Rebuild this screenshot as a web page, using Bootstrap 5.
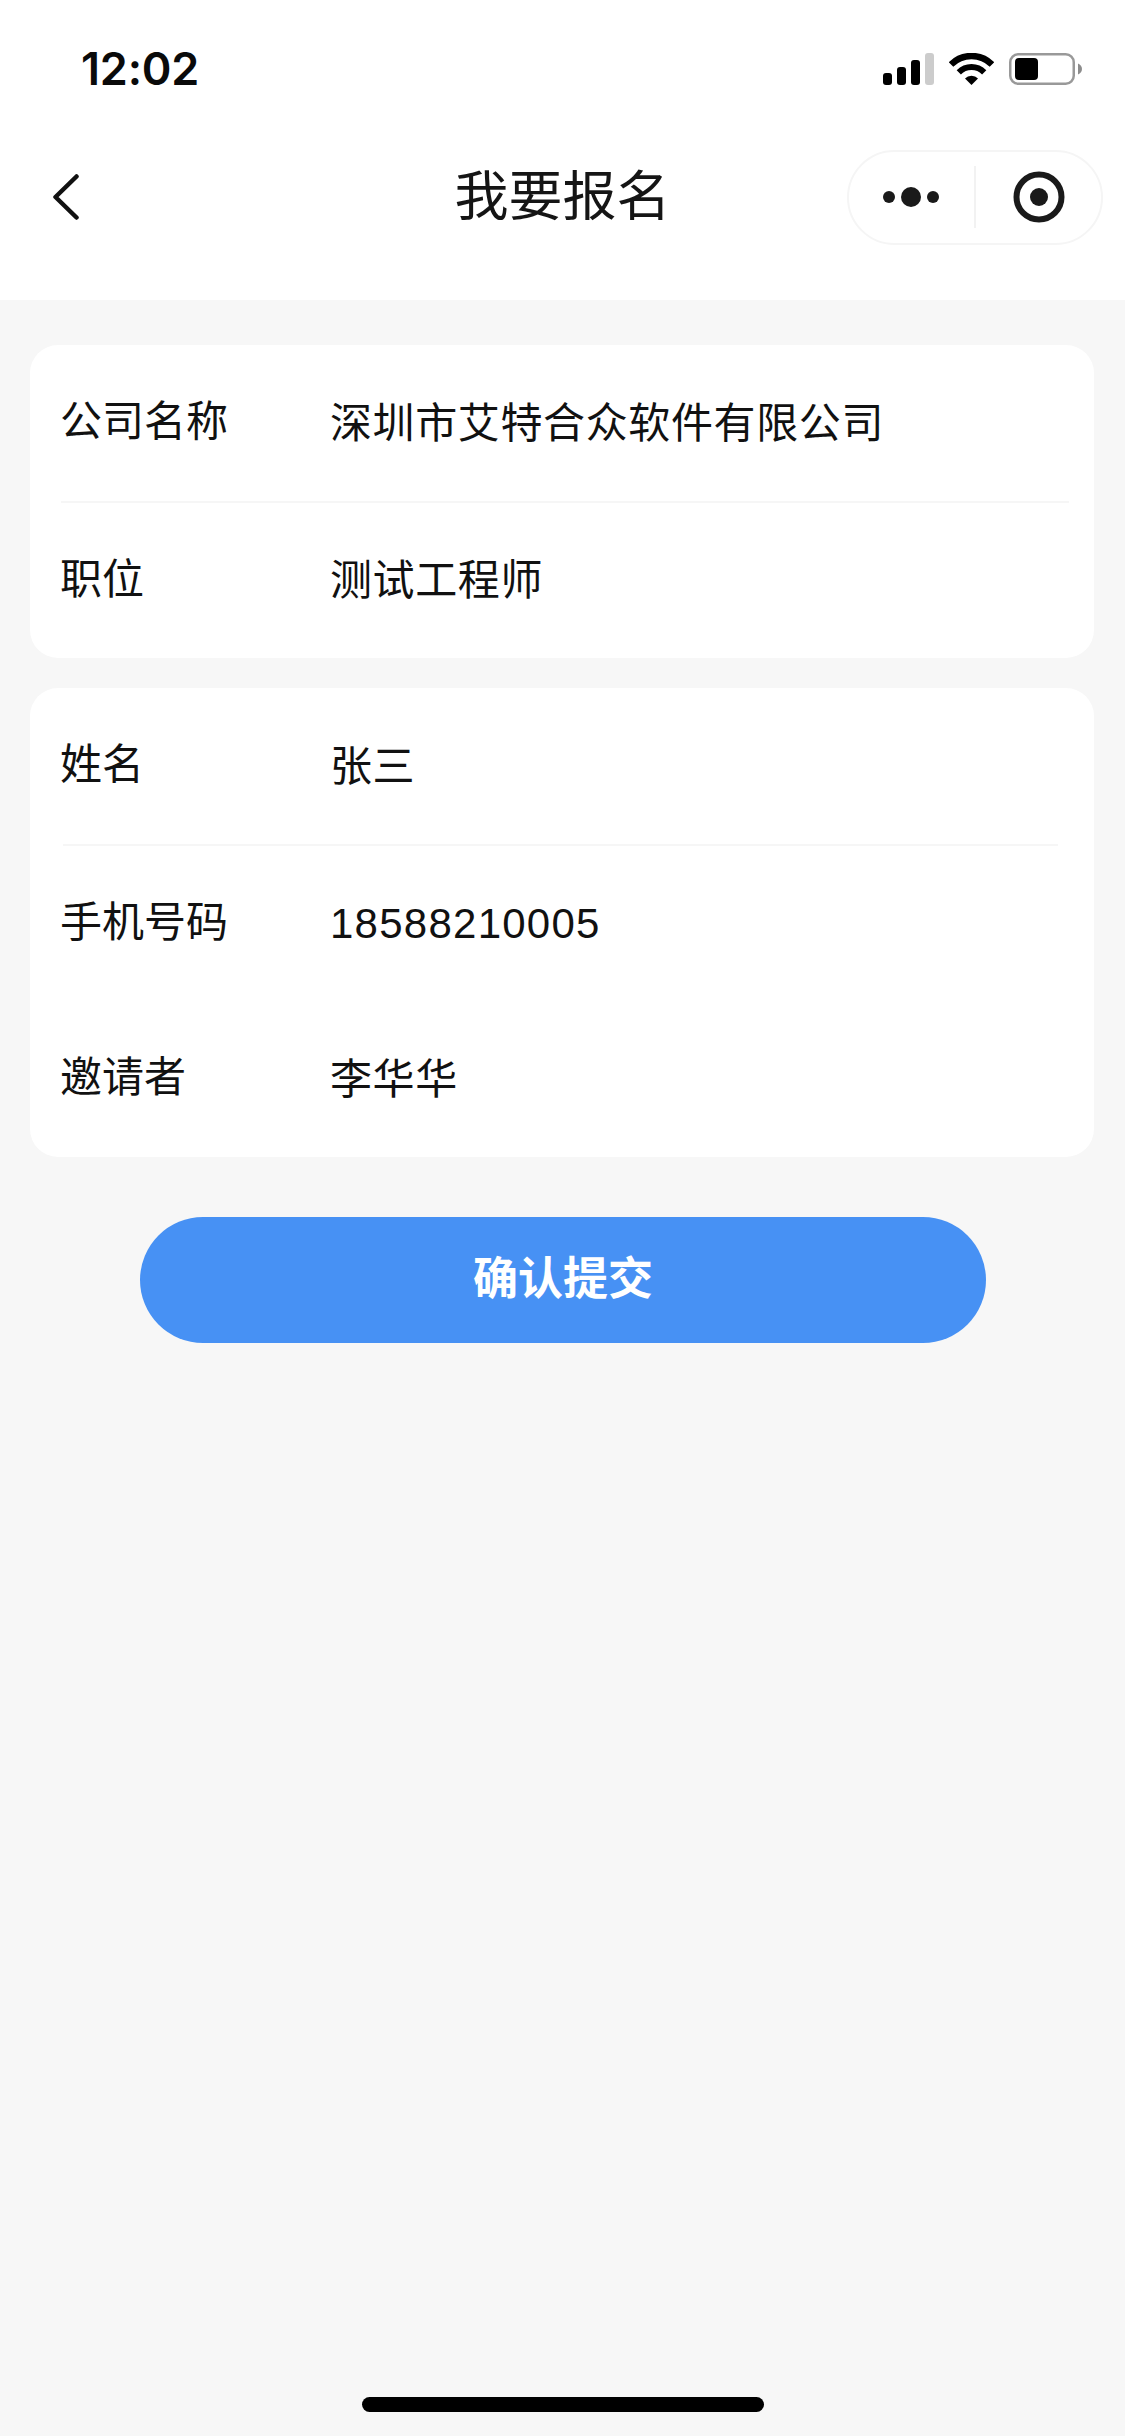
<!DOCTYPE html>
<html lang="zh-CN">
<head>
<meta charset="utf-8">
<title>我要报名</title>
<link href="https://cdn.jsdelivr.net/npm/bootstrap@5.3.0/dist/css/bootstrap.min.css" rel="stylesheet">
<style>
html,body{margin:0;background:#f7f7f7}
body{font-family:"Liberation Sans","Noto Sans CJK SC",sans-serif;color:#111;width:1125px}
.page-shell{min-height:2436px}
.top-area{height:300px;background:#fff}
.status-row{height:138px;padding:53px 30px 0 81px;align-items:flex-start}
.clock{font-family:"Inter","Liberation Sans",sans-serif;font-size:45px;font-weight:600;line-height:32px;color:#0a0a0a;letter-spacing:-.2px}
.status-icons{gap:15px;margin-right:13px}
.nav-row{display:grid;grid-template-columns:1fr auto 1fr;align-items:center;height:118px;padding:0 22px}
.back-mark{margin-left:31px}
.title-text{font-size:54px;line-height:70px;font-weight:400;color:#151515;margin:0}
.capsule{width:256px;height:95px;border:2px solid #f5f5f5;border-radius:48px;background:#fff;justify-self:end}
.capsule-half{width:125px}
.capsule-sep{width:2px;height:62px;background:#f2f2f2}
.form-wrap{padding:45px 31px 0 30px;gap:30px}
.info-card{border:0;border-radius:28px;background:#fff;overflow:hidden}
.info-row{height:155.500px;padding:2px 25px 0 30px;font-size:42px;line-height:60px;color:#111}
.info-label{width:270px;flex:none;margin-top:-3px}
.info-val{letter-spacing:.62px}
.info-sep{height:2px;background:#f6f6f6;margin:0 25px 0 31px}
.info-sep-b{margin:0 36px 0 33px}
.digits{letter-spacing:1.250px}
.submit-btn{width:846px;height:126px;margin:60px 0 0 140px;border:0;border-radius:63px;background:#4791f4;color:#fff;font-size:45px;font-weight:700;line-height:60px;padding:0}
.submit-btn:hover{background:#4791f4;color:#fff}
.home-bar{width:402px;height:15px;border-radius:8px;background:#000;margin:0 auto 24px}
</style>
</head>
<body>
<div class="page-shell d-flex flex-column">
  <header class="top-area">
    <div class="status-row d-flex justify-content-between">
      <div class="clock">12:02</div>
      <div class="status-icons d-flex align-items-start">
        <svg width="51" height="32" viewBox="0 0 51 32" aria-hidden="true">
          <rect x="0" y="20" width="9" height="12" rx="3" fill="#000"/>
          <rect x="14" y="14" width="9" height="18" rx="3" fill="#000"/>
          <rect x="28" y="7" width="9" height="25" rx="3" fill="#000"/>
          <rect x="42" y="0" width="9" height="32" rx="3" fill="#ccc"/>
        </svg>
        <svg width="45" height="32" viewBox="0 0 45 32" aria-hidden="true">
          <path d="M2 11.500A29 29 0 0 1 43 11.500" fill="none" stroke="#000" stroke-width="6.500"/>
          <path d="M9.800 19.300A18 18 0 0 1 35.200 19.300" fill="none" stroke="#000" stroke-width="6"/>
          <path d="M22.500 32L16 25.500A9 9 0 0 1 29 25.500Z" fill="#000"/>
        </svg>
        <svg width="73" height="32" viewBox="0 0 73 32" aria-hidden="true">
          <rect x="1.250" y="1.250" width="63.500" height="29.500" rx="8" fill="none" stroke="#999" stroke-width="2.500"/>
          <rect x="6" y="5" width="23" height="22" rx="4" fill="#000"/>
          <path d="M69 10.500C71.500 11.500 73 13.500 73 16S71.500 20.500 69 21.500Z" fill="#8c8c8c"/>
        </svg>
      </div>
    </div>
    <nav class="nav-row">
      <svg class="back-mark" width="26" height="46" viewBox="0 0 26 46" aria-hidden="true">
        <path d="M23.500 2.500L2.500 23L23.500 43.500" fill="none" stroke="#111" stroke-width="4.500" stroke-linecap="round" stroke-linejoin="round"/>
      </svg>
      <h1 class="title-text">我要报名</h1>
      <div class="capsule d-flex align-items-center">
        <div class="capsule-half d-flex justify-content-center">
          <svg width="58" height="20" viewBox="0 0 58 20" aria-hidden="true">
            <circle cx="6" cy="10" r="6" fill="#1a1a1a"/>
            <circle cx="28" cy="10" r="10" fill="#1a1a1a"/>
            <circle cx="50" cy="10" r="6" fill="#1a1a1a"/>
          </svg>
        </div>
        <div class="capsule-sep"></div>
        <div class="flex-grow-1 d-flex justify-content-center">
          <svg width="52" height="52" viewBox="0 0 52 52" aria-hidden="true">
            <circle cx="26" cy="26" r="22.500" fill="none" stroke="#1a1a1a" stroke-width="6"/>
            <circle cx="26" cy="26" r="9" fill="#1a1a1a"/>
          </svg>
        </div>
      </div>
    </nav>
  </header>

  <main class="flex-grow-1">
    <div class="form-wrap d-flex flex-column">
      <section class="card info-card">
        <div class="info-row d-flex align-items-center"><span class="info-label">公司名称</span><span class="info-val">深圳市艾特合众软件有限公司</span></div>
        <div class="info-sep"></div>
        <div class="info-row d-flex align-items-center"><span class="info-label">职位</span><span class="info-val">测试工程师</span></div>
      </section>
      <section class="card info-card">
        <div class="info-row d-flex align-items-center"><span class="info-label">姓名</span><span class="info-val">张三</span></div>
        <div class="info-sep info-sep-b"></div>
        <div class="info-row d-flex align-items-center"><span class="info-label">手机号码</span><span class="digits">18588210005</span></div>
        <div class="info-row d-flex align-items-center"><span class="info-label">邀请者</span><span class="info-val">李华华</span></div>
      </section>
    </div>
    <button type="button" class="btn submit-btn d-block">确认提交</button>
  </main>

  <div class="home-bar"></div>
</div>
<script src="https://cdn.jsdelivr.net/npm/bootstrap@5.3.0/dist/js/bootstrap.bundle.min.js"></script>
</body>
</html>
